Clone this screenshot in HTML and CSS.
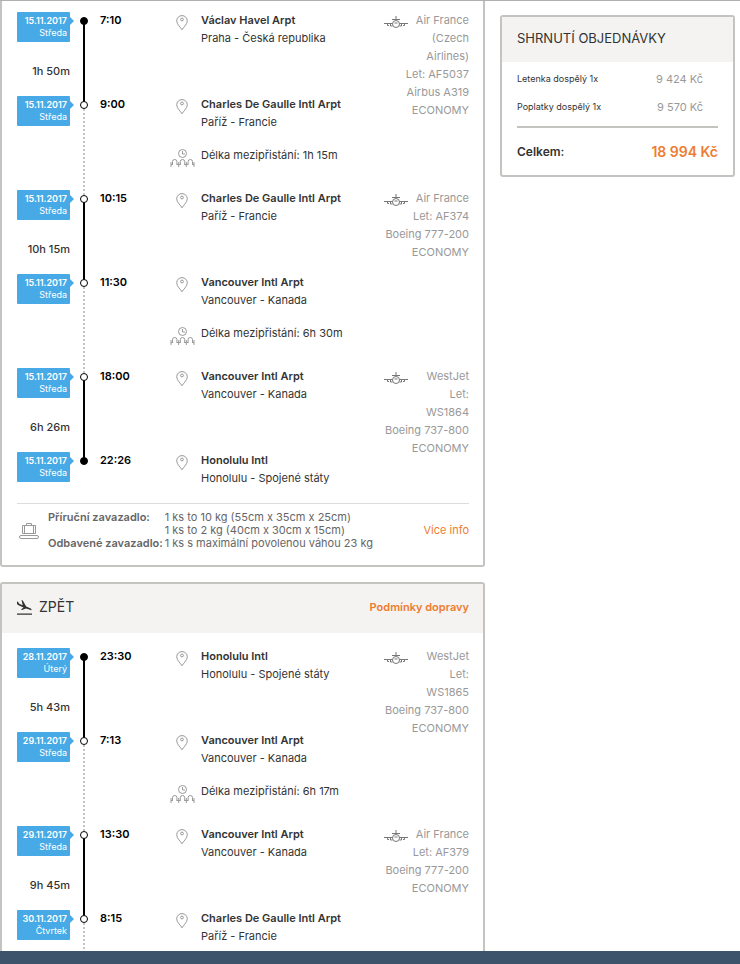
FILE: index.html
```
<!DOCTYPE html>
<html lang="cs">
<head>
  <meta charset="utf-8">
  <meta name="viewport" content="width=device-width, initial-scale=1">
  <title>Souhrn letu</title>
  <link rel="stylesheet" href="styles.css">
</head>
<body>
  <!-- shared icons -->
  <svg class="sprite" aria-hidden="true">
    <symbol id="pin" viewBox="0 0 12 16">
      <path d="M6 14.800C4.600 12 .7 9.600.7 5.800a5.300 5.200 0 0 1 10.600 0C11.300 9.600 7.400 12 6 14.800z"/>
      <circle cx="6" cy="4.500" r="1.400"/>
    </symbol>
    <symbol id="wait" viewBox="0 0 25 18">
      <circle cx="12.500" cy="4.500" r="4"/>
      <path d="M12.500 2v3h2.500"/>
      <path d="M1 18v-5M24 18v-5M8.700 18v-5M16.300 18v-5M1 15.500h1.500M7 15.500h3.300M14.700 15.500h3.300M22.500 15.500h1.500"/>
      <path d="M2.500 16v-3.500q0-2 2.200-2t2.200 2v3.500M10.300 16v-3.500q0-2 2.200-2t2.200 2v3.500M18.100 16v-3.500q0-2 2.200-2t2.200 2v3.500"/>
    </symbol>
    <symbol id="plane" viewBox="0 0 24 14">
      <path d="M12 0v4M8 3.500h8M0 7.500h8.500M15.500 7.500h8.500"/>
      <circle cx="12" cy="8" r="3.500"/>
      <path d="M10.500 7h3M3.500 8v1.500h1.500M6.500 8v2h2M20.500 8v1.500h-1.500M17.500 8v2h-2"/>
    </symbol>
  </svg>

  <main class="page">
    <div class="flights">
      <section class="card card-first">
        <div class="segment">
          <div class="date">15.11.2017<span>Středa</span></div>
          <div class="duration">1h 50m</div>
          <div class="track start full"></div>
          <div class="time">7:10</div>
          <svg class="pin"><use href="#pin"/></svg>
          <div class="place"><strong>Václav Havel Arpt</strong><br>Praha - Česká republika</div>
          <div class="airline"><svg class="plane"><use href="#plane"/></svg>Air France<br>(Czech<br>Airlines)<br>Let: AF5037<br>Airbus A319<br>ECONOMY</div>
          <div class="date arr">15.11.2017<span>Středa</span></div>
          <div class="track arr change"></div>
          <div class="time arr">9:00</div>
          <svg class="pin arr"><use href="#pin"/></svg>
          <div class="place arr"><strong>Charles De Gaulle Intl Arpt</strong><br>Paříž - Francie</div>
          <svg class="wait"><use href="#wait"/></svg>
          <div class="layover">Délka mezipřistání: 1h 15m</div>
        </div>

        <div class="segment">
          <div class="date">15.11.2017<span>Středa</span></div>
          <div class="duration">10h 15m</div>
          <div class="track start"></div>
          <div class="time">10:15</div>
          <svg class="pin"><use href="#pin"/></svg>
          <div class="place"><strong>Charles De Gaulle Intl Arpt</strong><br>Paříž - Francie</div>
          <div class="airline"><svg class="plane"><use href="#plane"/></svg>Air France<br>Let: AF374<br>Boeing 777-200<br>ECONOMY</div>
          <div class="date arr">15.11.2017<span>Středa</span></div>
          <div class="track arr change"></div>
          <div class="time arr">11:30</div>
          <svg class="pin arr"><use href="#pin"/></svg>
          <div class="place arr"><strong>Vancouver Intl Arpt</strong><br>Vancouver - Kanada</div>
          <svg class="wait"><use href="#wait"/></svg>
          <div class="layover">Délka mezipřistání: 6h 30m</div>
        </div>

        <div class="segment last">
          <div class="date">15.11.2017<span>Středa</span></div>
          <div class="duration">6h 26m</div>
          <div class="track start"></div>
          <div class="time">18:00</div>
          <svg class="pin"><use href="#pin"/></svg>
          <div class="place"><strong>Vancouver Intl Arpt</strong><br>Vancouver - Kanada</div>
          <div class="airline"><svg class="plane"><use href="#plane"/></svg>WestJet<br>Let:<br>WS1864<br>Boeing 737-800<br>ECONOMY</div>
          <div class="date arr">15.11.2017<span>Středa</span></div>
          <div class="track arr full"></div>
          <div class="time arr">22:26</div>
          <svg class="pin arr"><use href="#pin"/></svg>
          <div class="place arr"><strong>Honolulu Intl</strong><br>Honolulu - Spojené státy</div>
        </div>

        <div class="baggage">
          <svg class="bag" viewBox="0 0 20 16">
            <path d="M3.500 2.500h13v8h-13zM5.500 2.500v8M14.500 2.500v8M7.500 2.500v-2h5v2M2 12.500h16a1.500 1.500 0 0 1 0 3h-16a1.500 1.500 0 0 1 0-3z"/>
          </svg>
          <table>
            <tr>
              <th>Příruční zavazadlo:</th>
              <td>1 ks to 10 kg (55cm x 35cm x 25cm)<br>1 ks to 2 kg (40cm x 30cm x 15cm)</td>
            </tr>
            <tr>
              <th>Odbavené zavazadlo:</th>
              <td>1 ks s maximální povolenou váhou 23 kg</td>
            </tr>
          </table>
          <a href="#">Více info</a>
        </div>
      </section>

      <section class="card">
        <header class="card-head">
          <svg class="landing" viewBox="0 0 15 15">
            <path d="M0 13.500h15v1.300H0zM0 1.500l1 .3 1.200 2 3.500 1.400L4.500 0l1.300.5 3.400 6 4.600 2q1 .7.700 1.700L9 8.500 5 10l-1-.5 2.500-2L1 5 0 4z"/>
          </svg>
          <h2>ZPĚT</h2>
          <a href="#">Podmínky dopravy</a>
        </header>

        <div class="segments">
          <div class="segment">
            <div class="date">28.11.2017<span>Úterý</span></div>
            <div class="duration">5h 43m</div>
            <div class="track start full"></div>
            <div class="time">23:30</div>
            <svg class="pin"><use href="#pin"/></svg>
            <div class="place"><strong>Honolulu Intl</strong><br>Honolulu - Spojené státy</div>
            <div class="airline"><svg class="plane"><use href="#plane"/></svg>WestJet<br>Let:<br>WS1865<br>Boeing 737-800<br>ECONOMY</div>
            <div class="date arr">29.11.2017<span>Středa</span></div>
            <div class="track arr change"></div>
            <div class="time arr">7:13</div>
            <svg class="pin arr"><use href="#pin"/></svg>
            <div class="place arr"><strong>Vancouver Intl Arpt</strong><br>Vancouver - Kanada</div>
            <svg class="wait"><use href="#wait"/></svg>
            <div class="layover">Délka mezipřistání: 6h 17m</div>
          </div>

          <div class="segment">
            <div class="date">29.11.2017<span>Středa</span></div>
            <div class="duration">9h 45m</div>
            <div class="track start"></div>
            <div class="time">13:30</div>
            <svg class="pin"><use href="#pin"/></svg>
            <div class="place"><strong>Vancouver Intl Arpt</strong><br>Vancouver - Kanada</div>
            <div class="airline"><svg class="plane"><use href="#plane"/></svg>Air France<br>Let: AF379<br>Boeing 777-200<br>ECONOMY</div>
            <div class="date arr">30.11.2017<span>Čtvrtek</span></div>
            <div class="track arr change"></div>
            <div class="time arr">8:15</div>
            <svg class="pin arr"><use href="#pin"/></svg>
            <div class="place arr"><strong>Charles De Gaulle Intl Arpt</strong><br>Paříž - Francie</div>
          </div>
        </div>
      </section>
    </div>

    <aside class="card summary">
      <header class="card-head"><h2>SHRNUTÍ OBJEDNÁVKY</h2></header>
      <table>
        <tbody>
          <tr><th>Letenka dospělý 1x</th><td>9 424 Kč</td></tr>
          <tr><th>Poplatky dospělý 1x</th><td>9 570 Kč</td></tr>
        </tbody>
        <tfoot>
          <tr><th>Celkem:</th><td>18 994 Kč</td></tr>
        </tfoot>
      </table>
    </aside>
  </main>

  <footer class="bottom-bar"></footer>
</body>
</html>
```

FILE: styles.css
```
* {
  box-sizing: border-box;
}

body {
  display: flex;
  flex-direction: column;
  height: 100vh;
  margin: 0;
  border-top: 1px solid #b0b0b0;
  background: #fff;
  color: #333;
  font: 11px/18px Inter, "Liberation Sans", sans-serif;
}

a {
  color: #ee7c31;
  text-decoration: none;
}

svg {
  fill: none;
  stroke: #999;
}

h2 {
  margin: 0;
  font-size: 14px;
  font-weight: 400;
}

table {
  border-collapse: collapse;
}

th, td {
  padding: 0;
  text-align: left;
  vertical-align: top;
}

.sprite {
  display: none;
}

.page {
  display: flex;
  flex: 1;
  align-items: flex-start;
  gap: 15px;
  min-height: 0;
  padding-right: 5px;
  overflow: hidden;
}

.flights {
  flex: 1;
  min-width: 0;
}

.card {
  margin-bottom: 15px;
  border: 2px solid #c5c3c0;
  border-radius: 3px;
}

.card-first {
  padding: 10px 14px 15px 15px;
  border-top: 0;
  border-radius: 0 0 3px 3px;
}

.card-head {
  display: flex;
  align-items: center;
  gap: 7px;
  height: 49px;
  padding: 0 14px 3px 15px;
  background: #f4f3f2;
}

.card-head a {
  margin-left: auto;
  font-weight: 600;
}

.segments {
  padding: 14px 14px 0 15px;
}

/* one flight: departure row, arrival row, layover row */
.segment {
  display: grid;
  grid-template-columns: 53px 30px 70px 31px 1fr 85px;
  grid-template-rows: 84px 51px 43px;
}

.segment.last {
  grid-template-rows: 84px 52px;
}

.segment > * {
  grid-row: 1;
}

.segment > .arr {
  grid-row: 2;
}

.date {
  position: relative;
  grid-column: 1;
  height: 30px;
  margin-top: 1px;
  padding: 3px 3px 3px 0;
  border-radius: 1px;
  background: #47a9e6;
  color: #fff;
  font-size: 9px;
  font-weight: 600;
  line-height: 12px;
  text-align: right;
}

.date span {
  display: block;
  font-weight: 400;
}

.date::after {
  content: "";
  position: absolute;
  top: 5px;
  left: 100%;
  border: 4px solid transparent;
  border-left-color: #47a9e6;
  border-right: 0;
}

.duration {
  grid-column: 1;
  align-self: end;
  margin-bottom: 15px;
  font-weight: 500;
  text-align: right;
}

.track {
  position: relative;
  grid-column: 2;
}

.segment > .change {
  grid-row: 2 / 4;
}

/* line down to the next stop */
.track.start::before,
.track.change::before {
  content: "";
  position: absolute;
  top: 10px;
  left: 13px;
  width: 2px;
  height: 100%;
}

.track.start::before {
  background: #000;
}

.track.change::before {
  background: repeating-linear-gradient(#c4c4c4 0 2px, transparent 2px 4px);
}

/* stop marker */
.track::after {
  content: "";
  position: absolute;
  z-index: 1;
  top: 6px;
  left: 10px;
  width: 6px;
  height: 6px;
  border: 1px solid #000;
  border-radius: 50%;
  background: #fff;
}

.track.full::after {
  background: #000;
}

.time {
  grid-column: 3;
  color: #000;
  font-weight: 600;
}

.pin {
  grid-column: 4;
  width: 12px;
  height: 16px;
  margin: 4px 0 0 6px;
}

.place,
.layover {
  grid-column: 5;
  white-space: nowrap;
}

.place strong {
  font-weight: 600;
}

.segment > .wait,
.segment > .layover {
  grid-row: 3;
}

.wait {
  grid-column: 4;
  width: 25px;
  height: 18px;
  margin-top: 3px;
}

.segment > .airline {
  grid-column: 6;
  grid-row: 1 / -1;
  color: #999;
  text-align: right;
  white-space: nowrap;
}

.plane {
  float: left;
  width: 24px;
  height: 14px;
  margin-top: 5px;
  stroke: #777;
}

.baggage {
  display: flex;
  align-items: center;
  padding-top: 7px;
  border-top: 1px solid #ddd;
  color: #666;
  line-height: 13px;
}

.baggage th {
  padding-right: 2px;
  font-weight: 600;
}

.baggage a {
  margin-left: auto;
}

.bag {
  width: 20px;
  height: 16px;
  margin: 0 9px 0 2px;
}

.landing {
  width: 15px;
  height: 15px;
  fill: #333;
  stroke: none;
}

.summary {
  width: 235px;
  margin-top: 14px;
}

.summary .card-head {
  height: 45px;
}

.summary h2 {
  font-size: 13px;
}

.summary table {
  width: 201px;
  margin: 3px 15px 0;
}

.summary th {
  font-size: 9px;
  font-weight: 400;
  line-height: 28px;
}

.summary td {
  padding-right: 15px;
  color: #999;
  line-height: 28px;
  text-align: right;
}

.summary tbody::after {
  content: "";
  display: block;
  height: 5px;
}

.summary tfoot {
  border-top: 2px solid #c5c3c0;
}

.summary tfoot th,
.summary tfoot td {
  padding: 0;
  font-size: 12px;
  font-weight: 600;
  line-height: 47px;
}

.summary tfoot td {
  color: #ee7c31;
  font-size: 14px;
}

.bottom-bar {
  height: 13px;
  background: #3c536b;
}
```
